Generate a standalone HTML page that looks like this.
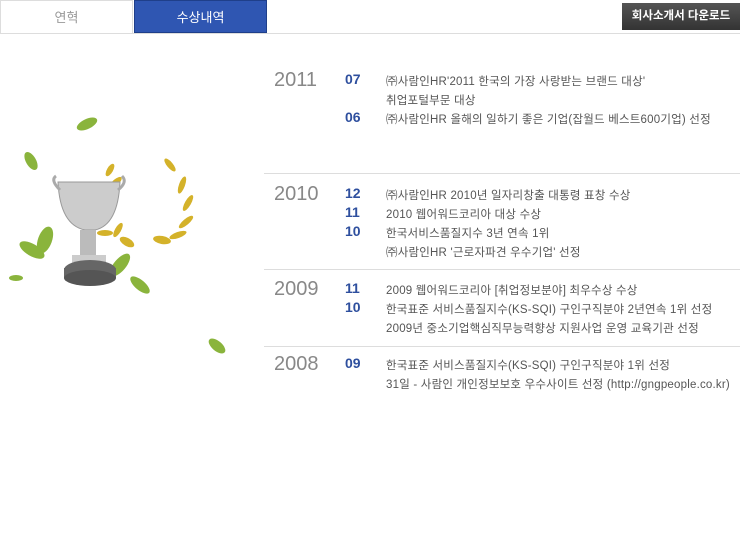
<!DOCTYPE html>
<html><head><meta charset="utf-8"><style>
body{margin:0;width:740px;height:560px;background:#fff;position:relative;overflow:hidden;font-family:"Liberation Sans","Noto Sans CJK KR",sans-serif}
.tab{position:absolute;top:0;height:33px;width:133px;text-align:center;line-height:34px;font-size:13px}
.t1{left:0;border:1px solid #ddd;border-bottom:none;color:#999;box-sizing:border-box;background:#fff}
.t2{left:134px;background:#2f56b2;color:#fff;border:1px solid #1f3f8a;box-sizing:border-box}
.hl{position:absolute;left:0;top:33px;width:740px;height:1px;background:#ddd}
.dl{position:absolute;left:622px;top:3px;width:118px;height:27px;background:linear-gradient(#555,#333);color:#fff;font-size:11.5px;line-height:27px;text-align:center;font-weight:bold}
.y{position:absolute;left:274px;font-size:20px;color:#888}
.m{position:absolute;left:345px;font-size:14px;font-weight:bold;color:#2e4f9e}
.x{position:absolute;left:386px;font-size:11.5px;color:#555;white-space:nowrap;letter-spacing:0.2px}
.sep{position:absolute;left:264px;width:476px;height:1px;background:#ddd}
</style></head><body>
<div class="tab t1">연혁</div><div class="tab t2">수상내역</div><div class="hl"></div>
<div class="dl">회사소개서 다운로드</div>

<div class="y" style="top:69px">2011</div>
<div class="m" style="top:71px">07</div><div class="x" style="top:73px">㈜사람인HR'2011 한국의 가장 사랑받는 브랜드 대상'</div>
<div class="x" style="top:92px">취업포털부문 대상</div>
<div class="m" style="top:109px">06</div><div class="x" style="top:111px">㈜사람인HR 올해의 일하기 좋은 기업(잡월드 베스트600기업) 선정</div>
<div class="sep" style="top:173px"></div>

<div class="y" style="top:183px">2010</div>
<div class="m" style="top:185px">12</div><div class="x" style="top:187px">㈜사람인HR 2010년 일자리창출 대통령 표창 수상</div>
<div class="m" style="top:204px">11</div><div class="x" style="top:206px">2010 웹어워드코리아 대상 수상</div>
<div class="m" style="top:223px">10</div><div class="x" style="top:225px">한국서비스품질지수 3년 연속 1위</div>
<div class="x" style="top:244px">㈜사람인HR '근로자파견 우수기업' 선정</div>
<div class="sep" style="top:269px"></div>

<div class="y" style="top:278px">2009</div>
<div class="m" style="top:280px">11</div><div class="x" style="top:282px">2009 웹어워드코리아 [취업정보분야] 최우수상 수상</div>
<div class="m" style="top:299px">10</div><div class="x" style="top:301px">한국표준 서비스품질지수(KS-SQI) 구인구직분야 2년연속 1위 선정</div>
<div class="x" style="top:320px">2009년 중소기업핵심직무능력향상 지원사업 운영 교육기관 선정</div>
<div class="sep" style="top:346px"></div>

<div class="y" style="top:353px">2008</div>
<div class="m" style="top:355px">09</div><div class="x" style="top:357px">한국표준 서비스품질지수(KS-SQI) 구인구직분야 1위 선정</div>
<div class="x" style="top:376px">31일 - 사람인 개인정보보호 우수사이트 선정 (http://gngpeople.co.kr)</div>

<svg style="position:absolute;left:0;top:110px" width="240" height="250" viewBox="0 0 240 250">
<g fill="#8ab43c">
<ellipse cx="87" cy="14" rx="11" ry="5" transform="rotate(-25 87 14)"/>
<ellipse cx="31" cy="51" rx="10" ry="5" transform="rotate(60 31 51)"/>
<ellipse cx="45" cy="130" rx="14" ry="7" transform="rotate(-70 45 130)"/>
<ellipse cx="32" cy="140" rx="14" ry="6" transform="rotate(30 32 140)"/>
<ellipse cx="120" cy="155" rx="14" ry="6" transform="rotate(-50 120 155)"/>
<ellipse cx="16" cy="168" rx="7" ry="3"/>
<ellipse cx="140" cy="175" rx="12" ry="5" transform="rotate(40 140 175)"/>
<ellipse cx="217" cy="236" rx="10" ry="5" transform="rotate(40 217 236)"/>
</g>
<g fill="#d4b22a">
<ellipse cx="110" cy="60" rx="7" ry="3" transform="rotate(-60 110 60)"/>
<ellipse cx="116" cy="72" rx="7" ry="3" transform="rotate(-40 116 72)"/>
<ellipse cx="112" cy="100" rx="7" ry="3" transform="rotate(-70 112 100)"/>
<ellipse cx="105" cy="123" rx="8" ry="3"/>
<ellipse cx="118" cy="120" rx="8" ry="3" transform="rotate(-60 118 120)"/>
<ellipse cx="127" cy="132" rx="8" ry="4" transform="rotate(30 127 132)"/>
<ellipse cx="170" cy="55" rx="8" ry="3" transform="rotate(50 170 55)"/>
<ellipse cx="182" cy="75" rx="9" ry="3" transform="rotate(-70 182 75)"/>
<ellipse cx="188" cy="93" rx="9" ry="3" transform="rotate(-60 188 93)"/>
<ellipse cx="186" cy="112" rx="9" ry="3" transform="rotate(-40 186 112)"/>
<ellipse cx="178" cy="125" rx="9" ry="3" transform="rotate(-20 178 125)"/>
<ellipse cx="162" cy="130" rx="9" ry="4" transform="rotate(10 162 130)"/>
</g>
<path d="M58 72 Q60 115 85 120 L95 120 Q118 115 120 72 Z" fill="#ccc" stroke="#999"/>
<path d="M60 80 Q50 70 56 66 M118 80 Q128 72 122 66" stroke="#aaa" stroke-width="3" fill="none"/>
<rect x="80" y="120" width="16" height="28" fill="#bbb"/>
<rect x="72" y="145" width="34" height="10" fill="#ccc"/>
<ellipse cx="90" cy="160" rx="26" ry="10" fill="#666"/>
<rect x="64" y="158" width="52" height="10" fill="#666"/>
<ellipse cx="90" cy="168" rx="26" ry="8" fill="#555"/>
</svg>
</body></html>
